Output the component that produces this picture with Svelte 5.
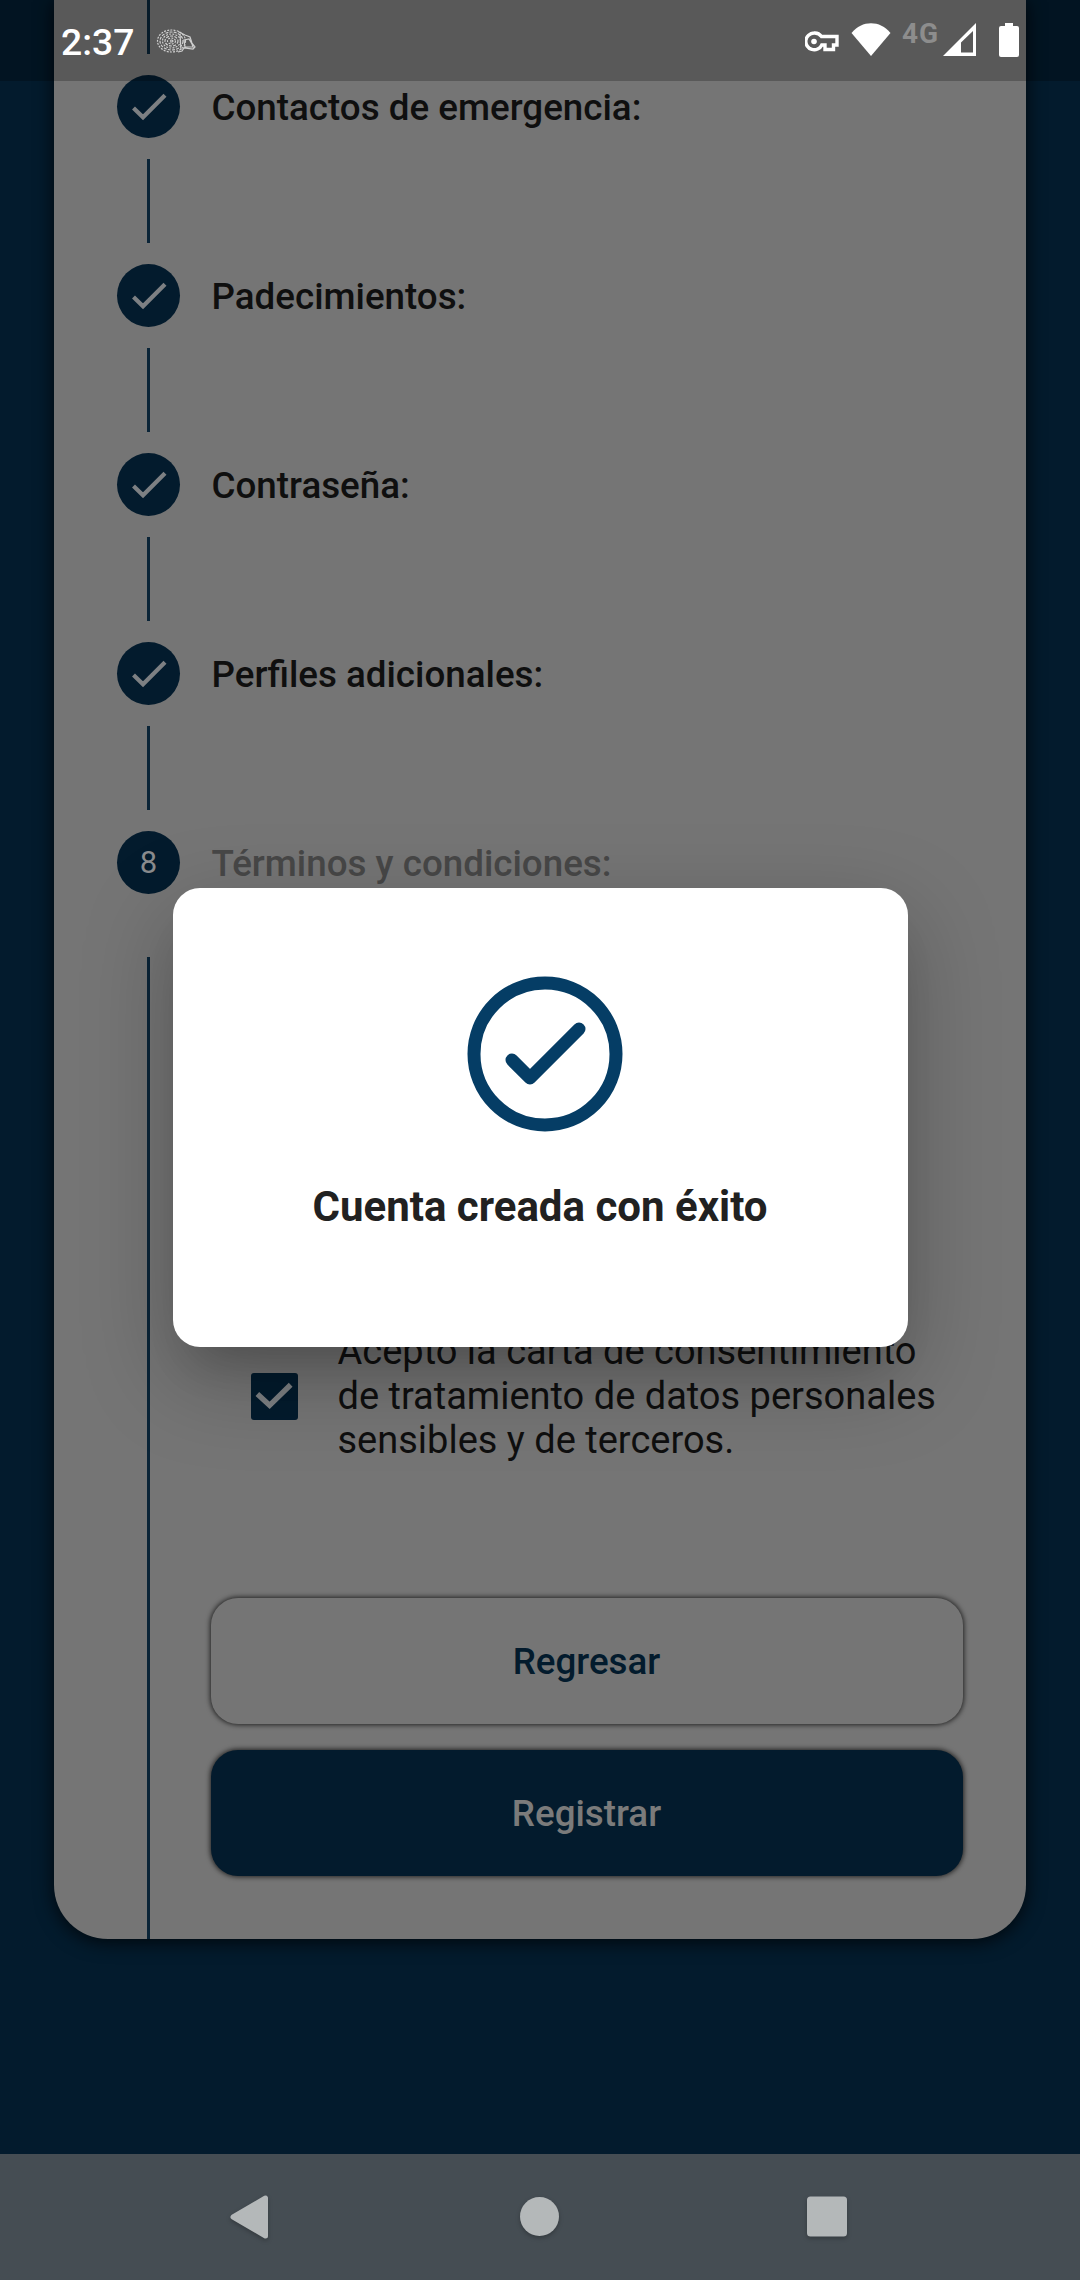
<script>
  const doneSteps = [
    'Contactos de emergencia:',
    'Padecimientos:',
    'Contraseña:',
    'Perfiles adicionales:'
  ];
  const quills = Array.from({ length: 6 }, (_, i) => i);
</script>

<div class="screen">
  <main class="card">
    <div class="line lead"></div>
    {#each doneSteps as title}
      <div class="step">
        <span class="dot">
          <svg viewBox="0 0 63 63" width="63" height="63"><path d="M16.5 33 L26 42.200 L48 20.200" /></svg>
        </span>
        <span class="title">{title}</span>
      </div>
      <div class="line"></div>
    {/each}
    <div class="step active">
      <span class="dot">8</span>
      <span class="title">Términos y condiciones:</span>
    </div>

    <section class="content">
      <div class="consent">
        <span class="checkbox">
          <svg viewBox="0 0 48 48" width="47" height="47"><path d="M6.500 21.500 L19 33 L40.500 12" /></svg>
        </span>
        <p>Acepto la carta de consentimiento<br />de tratamiento de datos personales<br />sensibles y de terceros.</p>
      </div>
      <div class="actions">
        <button class="back">Regresar</button>
        <button class="submit">Registrar</button>
      </div>
    </section>
  </main>

  <div class="modal">
    <svg class="ok" viewBox="0 0 156 156" width="156" height="156">
      <circle cx="78" cy="78" r="71" />
      <path d="M45 84 L63 102 L112 53" />
    </svg>
    <h1>Cuenta creada con éxito</h1>
  </div>

  <header class="status">
    <span class="clock">2:37</span>
    <svg class="hedgehog" viewBox="0 0 40 26" width="40" height="26">
      {#each quills as i}
        <ellipse cx="15.500" cy="13" rx={14 - i * 2.5} ry={11 - i * 2} stroke-dasharray={i % 2 ? '3 1.200' : '2 1.200'} />
      {/each}
      <path d="M22 3.500 L29 7 L34 9 L36 15 L39 19 L37 21 L28 20 L26 23 L22 24 M28 12 L33 11 L36 16 L37 19 L29 19 Z M24 6 L25 22" />
    </svg>
    <div class="signals">
      <svg class="key" viewBox="0 0 34 21" width="34" height="21">
        <path d="M9 2 a8.400 8.400 0 1 0 7.800 12 H20 V18.500 H28.500 V14 H32 V5.500 H16.500 A8.400 8.400 0 0 0 9 2 Z" />
        <circle cx="9" cy="10.500" r="2.800" />
      </svg>
      <svg class="wifi" viewBox="0 0 40 33" width="40" height="33"><path d="M0.500 10 C11 -3 29 -3 39.500 10 L20 33 Z" /></svg>
      <span class="net">4G</span>
      <svg class="cell" viewBox="0 0 33 33" width="33" height="33">
        <path fill-rule="evenodd" d="M33 0 V33 H0 Z M30 8 L18 19.500 V29.500 H30 Z" />
      </svg>
      <svg class="battery" viewBox="0 0 20 34" width="20" height="34">
        <path d="M6 0 H14 V3 H18 Q20 3 20 5 V32 Q20 34 18 34 H2 Q0 34 0 32 V5 Q0 3 2 3 H6 Z" />
      </svg>
    </div>
  </header>

  <nav>
    <svg viewBox="0 0 44 48" width="44" height="48"><path d="M5 24 L37.500 5 V43 Z" stroke-width="5" stroke-linejoin="round" /></svg>
    <svg viewBox="0 0 44 48" width="44" height="48"><circle cx="22.500" cy="23.500" r="19.500" /></svg>
    <svg viewBox="0 0 44 48" width="44" height="48"><rect x="2" y="3.500" width="40" height="40" rx="3.500" /></svg>
  </nav>
</div>

<style>
  :global(body) {
    margin: 0;
  }
  .screen {
    position: relative;
    box-sizing: border-box;
    width: 1080px;
    height: 2280px;
    overflow: hidden;
    padding: 0 54px;
    background: #031b2d;
    font-family: Roboto, sans-serif;
    display: flex;
    flex-direction: column;
  }
  svg {
    display: block;
  }
  .card {
    box-sizing: border-box;
    height: 1938.5px;
    padding: 0 63px;
    background: #757575;
    border-radius: 0 0 54px 54px;
    box-shadow: 0 3px 18px 1px rgba(0, 0, 0, 0.7);
    display: flex;
    flex-direction: column;
  }
  .line {
    width: 3px;
    height: 84px;
    margin: 21px 0 21px 30px;
    background: #0a2437;
    flex: none;
  }
  .line.lead {
    height: 54px;
    margin-top: 0;
  }
  .step {
    display: flex;
    align-items: center;
    height: 63px;
    gap: 31.5px;
    flex: none;
  }
  .dot {
    width: 63px;
    height: 63px;
    border-radius: 50%;
    background: #031b2d;
    color: #8a8c8e;
    font-size: 31px;
    line-height: 63px;
    text-align: center;
  }
  .dot path,
  .checkbox path {
    fill: none;
    stroke: #7d8083;
    stroke-width: 4.2;
  }
  .title {
    padding-top: 2px;
    font-size: 36.75px;
    font-weight: 500;
    line-height: 44px;
    color: #0f0f0f;
    white-space: nowrap;
  }
  .active .title {
    color: #474747;
  }
  .content {
    flex: 1;
    display: flex;
    flex-direction: column;
    margin: 63px 0 0 30px;
    border-left: 3px solid #0a2437;
    padding-left: 61px;
  }
  .consent {
    display: flex;
    align-items: center;
    gap: 40px;
    margin: 372px 0 0 39.5px;
  }
  .checkbox {
    width: 47px;
    height: 47px;
    margin-top: 2px;
    border-radius: 3px;
    background: #031b2d;
  }
  .checkbox path {
    stroke-width: 5.5;
  }
  .consent p {
    margin: 0;
    font-size: 38px;
    line-height: 44.5px;
    color: #0f0f0f;
    white-space: nowrap;
  }
  .actions {
    display: flex;
    flex-direction: column;
    gap: 26px;
    margin-top: 135px;
  }
  button {
    width: 752px;
    height: 126px;
    border: 0;
    padding: 2px 1px 0 0;
    border-radius: 27px;
    font-family: inherit;
    font-size: 36.75px;
    font-weight: 500;
    box-shadow: 0 0 5px 1px rgba(0, 0, 0, 0.7);
  }
  .back {
    background: #757575;
    color: #031b2d;
  }
  .submit {
    background: #031b2d;
    color: #7b7b7b;
  }
  .modal {
    position: absolute;
    left: 172.5px;
    top: 888px;
    width: 735px;
    height: 459px;
    border-radius: 27px;
    background: #fff;
    box-shadow: 0 33px 45px -21px rgba(0, 0, 0, 0.15), 0 30px 90px 0 rgba(0, 0, 0, 0.25);
    display: flex;
    flex-direction: column;
    align-items: center;
  }
  .ok {
    margin: 88px 0 0 10px;
  }
  .ok circle,
  .ok path {
    fill: none;
    stroke: #053d65;
    stroke-width: 13;
    stroke-linecap: round;
    stroke-linejoin: round;
  }
  h1 {
    margin: 50px 0 0;
    font-size: 42px;
    line-height: 50px;
    font-weight: 700;
    color: #212121;
    white-space: nowrap;
  }
  .status {
    position: absolute;
    inset: 0 0 auto 0;
    height: 81px;
    box-sizing: border-box;
    padding: 0 61px 0 61px;
    background: rgba(0, 0, 0, 0.24);
    display: flex;
    align-items: flex-start;
  }
  .clock {
    width: 73px;
    margin-top: 20px;
    font-size: 37.3px;
    line-height: 45px;
    font-weight: 500;
    color: #fff;
  }
  .hedgehog {
    margin: 28px 0 0 22px;
    fill: none;
    stroke: #cfcfcf;
    stroke-width: 1.2;
  }
  .signals {
    display: flex;
    align-items: flex-start;
    margin-left: auto;
    fill: #fff;
  }
  .key {
    margin: 31px 12px 0 0;
    fill: none;
    stroke: #fff;
    stroke-width: 3.4;
  }
  .key circle {
    fill: #fff;
    stroke: none;
  }
  .wifi {
    margin-top: 23px;
  }
  .net {
    width: 36px;
    margin: 18px 5px 0 11px;
    font-size: 28px;
    line-height: 32px;
    font-weight: 700;
    letter-spacing: 1px;
    color: #8d8d8d;
  }
  .cell {
    margin-top: 23px;
  }
  .battery {
    margin: 23px 0 0 23px;
  }
  nav {
    position: absolute;
    inset: auto 0 0 0;
    height: 126px;
    box-sizing: border-box;
    padding: 39px 231px 0 228px;
    background: #454d53;
    display: flex;
    justify-content: space-between;
  }
  nav svg {
    fill: #b4b8b9;
    filter: drop-shadow(0 2px 2px rgba(0, 0, 0, 0.25));
  }
  nav path {
    stroke: #b4b8b9;
  }
</style>
